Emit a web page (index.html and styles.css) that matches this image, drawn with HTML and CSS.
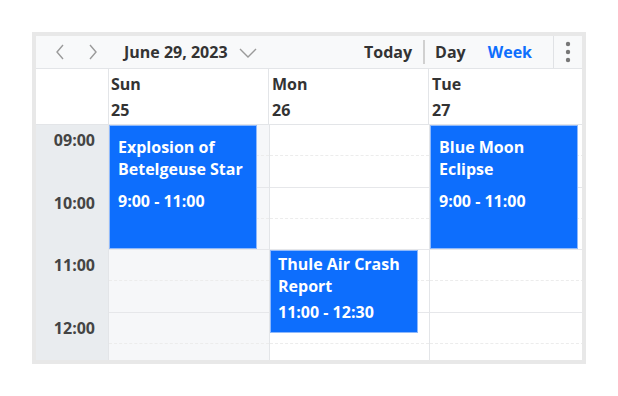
FILE: index.html
```html
<!DOCTYPE html>
<html lang="en">
<head>
    <meta charset="UTF-8">
    <title>Scheduler</title>
    <link rel="stylesheet" href="styles.css">
</head>
<body>
    <div class="scheduler">
        <div class="toolbar">
            <button class="nav-btn" title="Previous">
                <svg width="10" height="16" viewBox="0 0 10 16"><path d="M8 1 L2 8 L8 15" fill="none" stroke="#9a9a9a" stroke-width="1.4"/></svg>
            </button>
            <button class="nav-btn" title="Next">
                <svg width="10" height="16" viewBox="0 0 10 16"><path d="M2 1 L8 8 L2 15" fill="none" stroke="#9a9a9a" stroke-width="1.4"/></svg>
            </button>
            <span class="date">June 29, 2023</span>
            <svg class="caret" width="18" height="10" viewBox="0 0 18 10"><path d="M1 1 L9 9 L17 1" fill="none" stroke="#9a9a9a" stroke-width="1.4"/></svg>
            <span class="spacer"></span>
            <span class="tb-item">Today</span>
            <span class="tb-sep"></span>
            <span class="tb-item">Day</span>
            <span class="tb-item active">Week</span>
            <span class="more">
                <svg width="6" height="22" viewBox="0 0 6 22"><circle cx="3" cy="3" r="2.2" fill="#777"/><circle cx="3" cy="11" r="2.2" fill="#777"/><circle cx="3" cy="19" r="2.2" fill="#777"/></svg>
            </span>
        </div>
        <div class="head-row">
            <div class="corner"></div>
            <div class="day-head">Sun<br>25</div>
            <div class="day-head">Mon<br>26</div>
            <div class="day-head">Tue<br>27</div>
        </div>
        <div class="body-row">
            <div class="times">
                <div class="hour"><span>09:00</span></div>
                <div class="hour"><span>10:00</span></div>
                <div class="hour"><span>11:00</span></div>
                <div class="hour"><span>12:00</span></div>
            </div>
            <div class="day weekend">
                <div class="slot"></div><div class="slot"></div><div class="slot"></div><div class="slot"></div>
                <div class="slot"></div><div class="slot"></div><div class="slot"></div><div class="slot"></div>
                <div class="event" style="top: 0; height: 124px;">
                    <div class="ev-title">Explosion of Betelgeuse Star</div>
                    <div class="ev-time">9:00 - 11:00</div>
                </div>
            </div>
            <div class="day">
                <div class="slot"></div><div class="slot"></div><div class="slot"></div><div class="slot"></div>
                <div class="slot"></div><div class="slot"></div><div class="slot"></div><div class="slot"></div>
                <div class="event short" style="top: 125px; height: 83px;">
                    <div class="ev-title">Thule Air Crash Report</div>
                    <div class="ev-time">11:00 - 12:30</div>
                </div>
            </div>
            <div class="day">
                <div class="slot"></div><div class="slot"></div><div class="slot"></div><div class="slot"></div>
                <div class="slot"></div><div class="slot"></div><div class="slot"></div><div class="slot"></div>
                <div class="event" style="top: 0; height: 124px;">
                    <div class="ev-title">Blue Moon Eclipse</div>
                    <div class="ev-time">9:00 - 11:00</div>
                </div>
            </div>
        </div>
    </div>
</body>
</html>
```

FILE: styles.css
```css
body {
    margin: 0;
    padding: 32px;
    background: #fff;
    font-family: "Open Sans", sans-serif;
    font-weight: 700;
    font-size: 16px;
    color: #333;
}

.scheduler {
    width: 554px;
    height: 332px;
    box-sizing: border-box;
    border: 4px solid #e8e8e8;
    overflow: hidden;
    background: #fff;
}

.toolbar {
    display: flex;
    align-items: center;
    height: 32px;
    background: #f8f9fa;
    border-bottom: 1px solid #e3e5e8;
    padding-left: 16px;
}

.nav-btn {
    display: flex;
    align-items: center;
    justify-content: center;
    width: 16px;
    height: 32px;
    padding: 0;
    margin-right: 17px;
    border: 0;
    background: none;
}

.date {
    margin-left: 6px;
    line-height: 32px;
}

.caret {
    margin-left: 11px;
    margin-top: 2px;
}

.spacer {
    flex: 1;
}

.tb-item {
    line-height: 32px;
    margin-right: 22px;
}

.tb-item.active {
    color: #0d6efd;
    margin-right: 21px;
}

.tb-sep {
    width: 2px;
    height: 24px;
    background: #d0d0d0;
    margin: 0 10px 0 -11px;
}

.more {
    display: flex;
    align-items: center;
    justify-content: center;
    width: 28px;
    height: 32px;
    border-left: 1px solid #e0e2e5;
}

.head-row {
    display: flex;
    height: 55px;
    border-bottom: 1px solid #e3e5e8;
}

.corner {
    width: 72px;
    flex: none;
}

.day-head {
    width: 157px;
    flex: none;
    border-left: 1px solid #e3e5e8;
    padding: 2px 0 0 2px;
    line-height: 26px;
}

.day-head + .day-head {
    width: 156px;
    padding-left: 3px;
}

.body-row {
    display: flex;
}

.times {
    width: 72px;
    flex: none;
    background: #e9ecef;
}

.hour {
    height: 62.5px;
    text-align: right;
    padding-right: 13px;
    box-sizing: border-box;
    line-height: 31px;
    color: #444;
}

.day {
    position: relative;
    width: 159px;
    flex: none;
    border-left: 1px solid #e3e5e8;
}

.day.weekend {
    width: 160px;
    background: #f6f7f9;
}

.slot {
    height: 31.25px;
    box-sizing: border-box;
    border-bottom: 1px dashed #ececec;
}

.slot:nth-child(even) {
    border-bottom: 1px solid #e6e7ea;
}

.event {
    position: absolute;
    left: 0;
    width: 148px;
    box-sizing: border-box;
    background: #0d6efd;
    border: 1px solid #8fb9fb;
    color: #fff;
    padding: 10px 8px 0 8px;
    line-height: 22px;
}

.ev-time {
    margin-top: 10px;
}

.event.short {
    padding-top: 2px;
    padding-left: 7px;
}

.event.short .ev-time {
    margin-top: 4px;
}
```
